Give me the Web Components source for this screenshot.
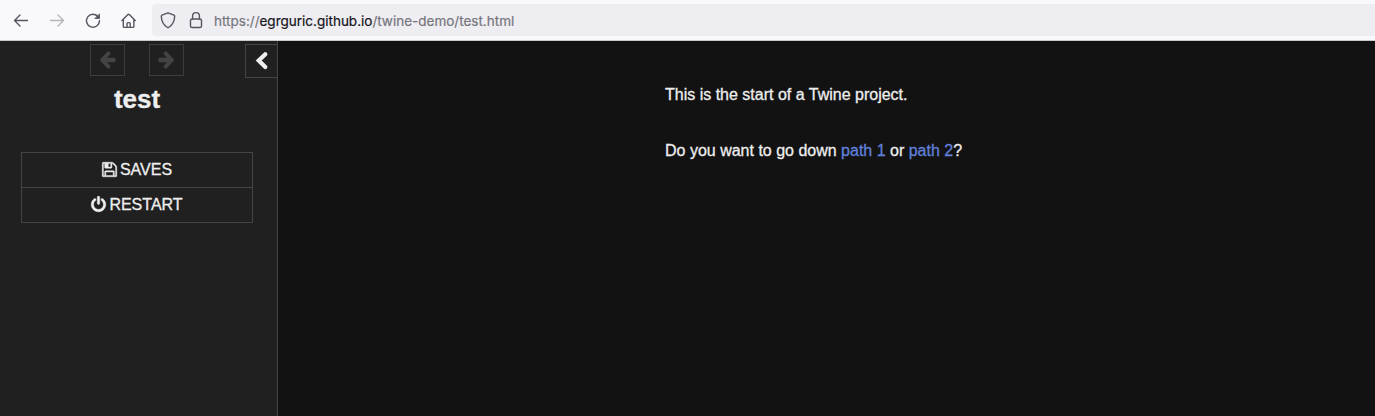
<!DOCTYPE html>
<html lang="en"><head><meta charset="utf-8"><title>test</title>
<style>html,body{margin:0;height:100%;overflow:hidden;background:#121212}</style></head>
<body>
<twine-window></twine-window>
<script>
const define = (name, html) => customElements.define(name, class extends HTMLElement {
  constructor() { super(); this.attachShadow({mode: 'open'}).innerHTML = html; }
});

define('browser-toolbar', `<style>
:host{display:flex;align-items:stretch;height:40px;box-sizing:content-box;border-bottom:1px solid #c9c9cc;background:#f9f9fb;padding-left:12px}
nav{display:flex;align-items:center;gap:18px;width:140px}
svg{display:block;flex:none;fill:none;stroke:#55545f;stroke-width:1.4;stroke-linecap:round;stroke-linejoin:round}
.off{stroke:#b4b4ba}
.url{display:flex;align-items:center;flex:1;margin:4px 0;background:#eeedf2;border-radius:4px 0 0 4px;padding-left:7px;font:13.5px/32px Inter,sans-serif;color:#77767d;white-space:pre;-webkit-text-stroke:.2px}
.url svg{margin-right:10px}
.address{margin-left:-1px;padding-top:1px}
b{font-weight:400;color:#15141a}
</style>
<nav>
<svg width="18" height="18" viewBox="0 0 18 18"><path d="M15.500 9.500H2.500M8 4 2.500 9.500 8 15"/></svg>
<svg class="off" width="18" height="18" viewBox="0 0 18 18"><path d="M2.500 9.500h13M10 4l5.500 5.500L10 15"/></svg>
<svg width="18" height="18" viewBox="0 0 18 18"><path d="M14.300 6A6.500 6.500 0 1 0 15.500 9.800"/><path d="M15.500 3.200v4.300h-4.300z" fill="#55545f" stroke-width=".8"/></svg>
<svg width="18" height="18" viewBox="0 0 18 18"><path d="M2 9.500 7.900 3.600q.7-.6 1.400 0L15.200 9.500M3.300 8.500v6.700q0 1.200 1.200 1.200h8.200q1.200 0 1.200-1.200V8.500M7 16.200v-3.600q0-1 1-1h1.200q1 0 1 1v3.600"/></svg>
</nav>
<div class="url">
<svg width="18" height="18" viewBox="0 0 18 18"><path d="M9 1.800 15 4.200q.7.300.7 1.100C15.500 10.200 13.400 14.200 9.500 16.500q-.5.300-1 0C4.600 14.200 2.500 10.200 2.300 5.300Q2.300 4.500 3 4.200z"/></svg>
<svg width="18" height="18" viewBox="0 0 18 18"><rect x="3.500" y="8" width="11" height="8.500" rx="1.600"/><path d="M5.600 8V5a3.400 3.400 0 0 1 6.800 0v3"/></svg>
<span class="address">https://<b>egrguric.github.io</b>/twine-demo/test.html</span>
</div>`);

define('history-button', `<style>
:host{display:flex;box-sizing:border-box;width:35px;height:32px;border:1px solid #3d3d3d;align-items:center;justify-content:center}
:host([forward]) svg{transform:scaleX(-1)}
svg{display:block;fill:#434343}
</style><svg width="19" height="20" viewBox="0 0 1792 1792" preserveAspectRatio="none"><path d="M1664 896v128q0 53-32.500 90.500t-84.500 37.500h-704l293 294q38 36 38 90t-38 90l-75 76q-37 37-90 37-52 0-91-37l-651-652q-37-37-37-90 0-52 37-91l651-650q38-38 91-38 52 0 90 38l75 74q38 38 38 91t-38 91l-293 293h704q52 0 84.500 37.500t32.500 90.500z" transform="translate(0 -64)"/></svg>`);

define('menu-item', `<style>
:host{display:flex;align-items:center;justify-content:center;height:34px;gap:2px;padding-right:1px;font-size:16px;text-transform:uppercase}
::slotted(svg){display:block;fill:currentColor;stroke:currentColor;stroke-width:45px;margin-top:-1px}
</style><slot name="icon"></slot><span><slot></slot></span>`);

define('side-bar', `<style>
:host{display:block;box-sizing:border-box;width:278px;border-right:1px solid #444;background:#202020;padding-top:3px}
.tray{display:grid;grid-template-columns:35px 35px 32px;column-gap:24px;align-items:start;padding-left:90px}
.toggle{margin-left:37px;box-sizing:border-box;width:32px;height:34px;border:1px solid #444;border-right:0;display:flex;align-items:center;justify-content:center}
.toggle svg{display:block}
h1{margin:5px 0 0;padding-right:3px;text-align:center;font-size:26px;line-height:32px;-webkit-text-stroke:.3px}
.menu{margin:37px 24px 0 21px;border:1px solid #444}
menu-item+menu-item{border-top:1px solid #444}
</style>
<div class="tray"><history-button></history-button><history-button forward></history-button>
<div class="toggle"><svg width="18" height="20" viewBox="0 0 18 20"><path d="M12.300 3.200 5.700 9.600 12.300 16" fill="none" stroke="#eee" stroke-width="4.200" stroke-linecap="round"/></svg></div></div>
<h1>test</h1>
<div class="menu">
<menu-item><svg slot="icon" width="17" height="17" viewBox="0 0 1792 1792"><path d="M512 1536h768v-384h-768v384zm896 0h128v-896q0-14-10-38.500t-20-34.500l-281-281q-10-10-34-20t-39-10v416q0 40-28 68t-68 28h-576q-40 0-68-28t-28-68v-416h-128v1280h128v-416q0-40 28-68t68-28h832q40 0 68 28t28 68v416zm-384-928v-320q0-13-9.500-22.500t-22.500-9.500h-192q-13 0-22.500 9.500t-9.500 22.500v320q0 13 9.500 22.500t22.500 9.500h192q13 0 22.500-9.500t9.500-22.500zm640 32v928q0 40-28 68t-68 28h-1344q-40 0-68-28t-28-68v-1344q0-40 28-68t68-28h928q40 0 88 20t76 48l280 280q28 28 48 76t20 88z"/></svg>Saves</menu-item>
<menu-item><svg slot="icon" width="17" height="17" viewBox="0 0 1792 1792"><path d="M1664 896q0 156-61 298t-164 245-245 164-298 61-298-61-245-164-164-245-61-298q0-182 80.500-343t226.500-270q43-32 95.500-25t83.500 50q32 42 24.500 94.500t-49.500 84.500q-98 74-151.500 181t-53.500 228q0 104 40.500 198.500t109.500 163.500 163.500 109.500 198.500 40.500 198.500-40.500 163.500-109.500 109.500-163.500 40.500-198.500q0-121-53.500-228t-151.500-181q-42-32-49.500-84.500t24.500-94.500q31-43 84-50t95 25q146 109 226.500 270t80.500 343zm-640-768v640q0 52-38 90t-90 38-90-38-38-90v-640q0-52 38-90t90-38 90 38 38 90z"/></svg>Restart</menu-item>
</div>`);

define('story-passage', `<style>
:host{display:block;flex:1;padding:40px 0 0 387px;font-size:16px;line-height:28px}
p{margin:0 0 28px;white-space:nowrap}
a{color:#6080da}
</style><p>This is the start of a Twine project.</p><p>Do you want to go down <a>path 1</a> or <a>path 2</a>?</p>`);

define('twine-window', `<style>
:host{display:flex;flex-direction:column;height:100vh;background:#121212;color:#eee;font-family:"Liberation Sans",Arial,sans-serif}
main{display:flex;flex:1;-webkit-text-stroke:.3px}
</style><browser-toolbar></browser-toolbar><main><side-bar></side-bar><story-passage></story-passage></main>`);
</script></body></html>
